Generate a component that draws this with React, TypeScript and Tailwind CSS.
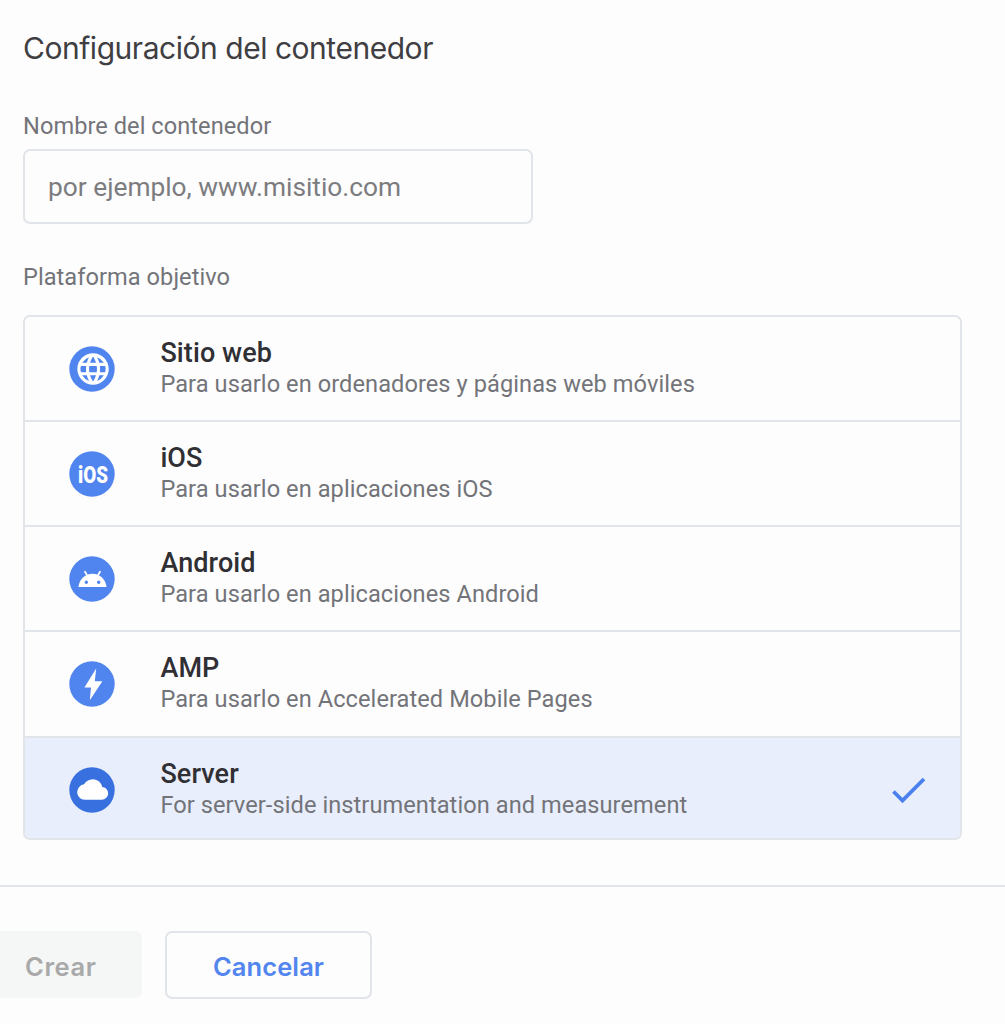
import React from 'react';
import clsx from 'clsx';

const platforms = [
  {
    name: 'Sitio web',
    description: 'Para usarlo en ordenadores y páginas web móviles',
    height: 'h-[105px]',
    icon: (
      <path
        transform="translate(5.2 4.2) scale(1.57)"
        d="M11.99 2C6.47 2 2 6.48 2 12s4.47 10 9.99 10C17.52 22 22 17.52 22 12S17.52 2 11.99 2zm6.93 6h-2.95a15.65 15.65 0 00-1.38-3.56A8.03 8.03 0 0118.92 8zM12 4.04c.83 1.2 1.48 2.53 1.91 3.96h-3.82c.43-1.43 1.08-2.76 1.91-3.96zM4.26 14C4.1 13.36 4 12.69 4 12s.1-1.36.26-2h3.38c-.08.66-.14 1.32-.14 2s.06 1.34.14 2H4.26zm.82 2h2.95c.32 1.25.78 2.45 1.38 3.56A7.987 7.987 0 015.08 16zm2.95-8H5.08a7.987 7.987 0 014.33-3.56A15.65 15.65 0 008.03 8zM12 19.96c-.83-1.2-1.48-2.53-1.91-3.96h3.82c-.43 1.43-1.08 2.76-1.91 3.96zM14.34 14H9.66c-.09-.66-.16-1.32-.16-2s.07-1.35.16-2h4.68c.09.65.16 1.32.16 2s-.07 1.34-.16 2zm.25 5.56c.6-1.11 1.06-2.31 1.38-3.56h2.95a8.03 8.03 0 01-4.33 3.56zM16.36 14c.08-.66.14-1.32.14-2s-.06-1.34-.14-2h3.38c.16.64.26 1.31.26 2s-.1 1.36-.26 2h-3.38z"
      />
    ),
  },
  {
    name: 'iOS',
    description: 'Para usarlo en aplicaciones iOS',
    height: 'h-[105px]',
    icon: (
      <text
        x="9"
        y="32"
        textLength="30"
        lengthAdjust="spacingAndGlyphs"
        className="font-['Roboto',sans-serif] text-[23px] font-black"
      >
        iOS
      </text>
    ),
  },
  {
    name: 'Android',
    description: 'Para usarlo en aplicaciones Android',
    height: 'h-[105px]',
    icon: (
      <>
        <path d="M16 15.7l2.6 4.4M31 15.7l-2.6 4.4" stroke="#fff" strokeWidth="1.8" strokeLinecap="round" />
        <path
          fillRule="evenodd"
          d="M9.4 31.1C10.2 23.5 16 17.7 23.5 17.7S36.8 23.5 37.6 31.1zM17.3 24.6a1.7 1.7 0 1 0 0 3.4 1.7 1.7 0 0 0 0-3.4zM29.7 24.6a1.7 1.7 0 1 0 0 3.4 1.7 1.7 0 0 0 0-3.4z"
        />
      </>
    ),
  },
  {
    name: 'AMP',
    description: 'Para usarlo en Accelerated Mobile Pages',
    height: 'h-[106px]',
    icon: <path d="M27.2 7.5L15.4 26.4H22l-1.2 12.8L33.4 20.2H25.8z" />,
  },
  {
    name: 'Server',
    description: 'For server-side instrumentation and measurement',
    height: 'h-[100px]',
    selected: true,
    icon: (
      <path
        transform="translate(8.2 7) scale(1.29)"
        d="M19.35 10.04A7.49 7.49 0 0 0 12 4C9.11 4 6.6 5.64 5.35 8.04A5.994 5.994 0 0 0 0 14c0 3.31 2.69 6 6 6h13c2.76 0 5-2.24 5-5 0-2.64-2.05-4.78-4.65-4.96z"
      />
    ),
  },
];

export default function App() {
  return (
    <div className="h-[1024px] overflow-hidden bg-[#fdfdfd] font-['Roboto',sans-serif]">
      <div className="h-[885px] pl-[23px] pr-[43px] pt-[28px]">
        <h1 className="font-['Inter',sans-serif] text-[30px] leading-[40px] tracking-[-0.47px] text-[#3f3e43]">
          Configuración del contenedor
        </h1>

        <label htmlFor="name" className="mt-[44px] block text-[23.6px] leading-[28px] tracking-[0.05px] text-[#737479]">
          Nombre del contenedor
        </label>
        <input
          id="name"
          type="text"
          placeholder="por ejemplo, www.misitio.com"
          className="mt-[9px] block h-[75px] w-[510px] rounded-[7px] border-2 border-[#e1e4e8] bg-[#fdfdfd] px-[23px] text-[26.3px] text-[#3c4043] outline-none placeholder:text-[#7c7c7f]"
        />

        <p className="mt-[39px] text-[23.6px] leading-[28px] tracking-[0.05px] text-[#737479]">Plataforma objetivo</p>
        <ul className="mt-[24px] overflow-hidden rounded-[7px] border-2 border-[#e1e4e8]">
          {platforms.map((platform) => (
            <li
              key={platform.name}
              className={clsx(
                'flex pl-[44px] pr-[33px]',
                platform.height,
                platform.selected ? 'bg-[#e8eefb]' : 'border-b-2 border-[#e1e4e8]'
              )}
            >
              <svg viewBox="0 0 46 46" className="mt-[29px] h-[46px] w-[46px] shrink-0" fill="#fff">
                <circle cx="23" cy="23" r="22.7" fill={platform.selected ? '#3870e0' : '#5084ee'} />
                {platform.icon}
              </svg>
              <div className="ml-[45.4px] flex-1 pt-5">
                <h2 className="text-[27px] font-medium leading-[32px] tracking-[0.1px] text-[#302f34]">
                  {platform.name}
                </h2>
                <p className="text-[23.6px] leading-[30px] tracking-[0.07px] text-[#737479]">{platform.description}</p>
              </div>
              {platform.selected && (
                <svg viewBox="0 0 36 28" className="mt-[38px] h-[28px] w-[36px]" fill="none">
                  <path d="M2.5 15.5l9 9L33 3" stroke="#4a7fee" strokeWidth="3.8" />
                </svg>
              )}
            </li>
          ))}
        </ul>
      </div>

      <div className="flex gap-[23px] border-t-2 border-[#e1e4e8] pt-[44px] font-['Inter',sans-serif] text-[25.5px] font-semibold leading-[30px]">
        <button
          disabled
          className="h-[67px] w-[142px] rounded-r-[7px] bg-[#f5f7f6] pl-[25px] pt-1 text-left tracking-[0.6px] text-[#a9a9a9]"
        >
          Crear
        </button>
        <button className="h-[68px] w-[207px] rounded-[7px] border-2 border-[#e1e4e8] pt-[3px] tracking-[0.1px] text-[#5385ee]">
          Cancelar
        </button>
      </div>
    </div>
  );
}
